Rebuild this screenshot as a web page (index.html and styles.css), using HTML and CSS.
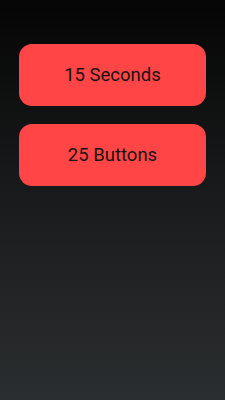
FILE: index.html
```html
<!DOCTYPE html>
<html>
<head>
<meta charset="utf-8">
<link rel="stylesheet" href="styles.css">
</head>
<body>
<div class="screen">
  <button class="btn">15 Seconds</button>
  <button class="btn">25 Buttons</button>
</div>
</body>
</html>
```
FILE: styles.css
```css
html, body {
  margin: 0;
  padding: 0;
  height: 100%;
}
body {
  background: linear-gradient(to bottom, #050505 0%, #1a1b1c 50%, #2b2e30 100%);
}
.screen {
  display: flex;
  flex-direction: column;
  gap: 18px;
  padding: 44px 19px 0 19px;
}
.btn {
  height: 62px;
  border: none;
  border-radius: 13px;
  background: #ff4545;
  color: #1a1212;
  font-family: Roboto, "Noto Sans", sans-serif;
  font-size: 18.5px;
  padding: 0;
}
```
